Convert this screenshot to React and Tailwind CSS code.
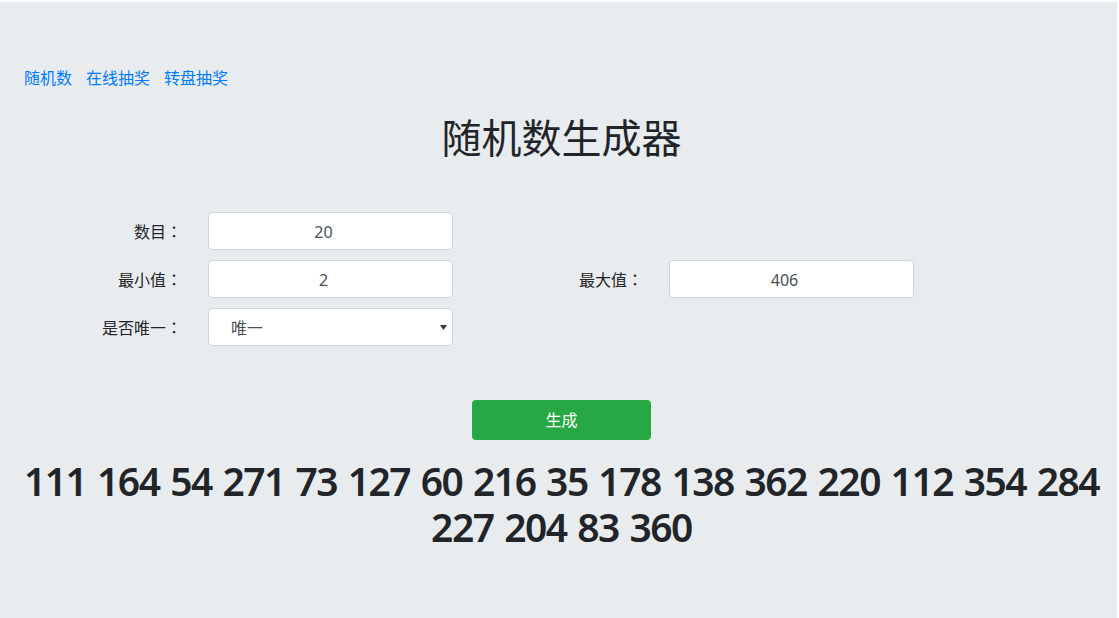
import React from "react";

const font = "font-['Noto_Sans','Noto_Sans_CJK_SC',sans-serif]";

function Field({ value }) {
  return (
    <input
      type="text"
      defaultValue={value}
      className="ml-[26px] h-[38px] w-[245px] rounded border border-[#ced4da] bg-white pl-3 pr-[26px] pt-[2px] text-center text-base text-[#495057] outline-none"
    />
  );
}

function Label({ text, className = "" }) {
  return (
    <label className={"w-[100px] text-right text-base leading-6 text-[#212529] " + className}>
      {text}
      <span className="font-['Noto_Sans_CJK_TC',sans-serif]">：</span>
    </label>
  );
}

export default function App() {
  return (
    <div className={"h-[618px] w-full bg-white " + font}>
      <div className="mr-[2px] mt-[2px] h-[616px] bg-[#e9ecef] pl-6 pr-[18px] pt-16">
        <nav className="flex gap-[14px] text-base leading-6 text-[#007bff]">
          <a href="#">随机数</a>
          <a href="#">在线抽奖</a>
          <a href="#">转盘抽奖</a>
        </nav>
        <h1 className="mt-6 text-center text-[40px] font-normal leading-[48px] text-[#212529]">
          随机数生成器
        </h1>
        <form className="ml-[58px] mt-[50px] flex flex-col gap-[10px]">
          <div className="flex items-center">
            <Label text="数目" />
            <Field value="20" />
          </div>
          <div className="flex items-center">
            <Label text="最小值" />
            <Field value="2" />
            <Label text="最大值" className="ml-[90px]" />
            <Field value="406" />
          </div>
          <div className="flex items-center">
            <Label text="是否唯一" />
            <div className="relative ml-[26px] h-[38px] w-[245px]">
              <select className="h-full w-full appearance-none rounded border border-[#ced4da] bg-white pl-[22px] pt-[2px] text-base text-[#495057] outline-none">
                <option>唯一</option>
                <option>不唯一</option>
              </select>
              <svg
                className="pointer-events-none absolute right-[6px] top-[17px]"
                width="7"
                height="5"
                viewBox="0 0 7 5"
              >
                <path d="M0 0 L7 0 L3.5 5 Z" fill="#3a3a3a" />
              </svg>
            </div>
          </div>
        </form>
        <button
          type="button"
          className="mx-auto mt-[54px] block h-10 w-[179px] rounded bg-[#28a745] text-base text-white"
        >
          生成
        </button>
        <h1 className="mt-[18px] whitespace-nowrap text-center text-[39px] font-semibold leading-[46px] tracking-[-1.5px] [word-spacing:2px] text-[#212529]">
          111 164 54 271 73 127 60 216 35 178 138 362 220 112 354 284
          <br />
          227 204 83 360
        </h1>
      </div>
    </div>
  );
}
